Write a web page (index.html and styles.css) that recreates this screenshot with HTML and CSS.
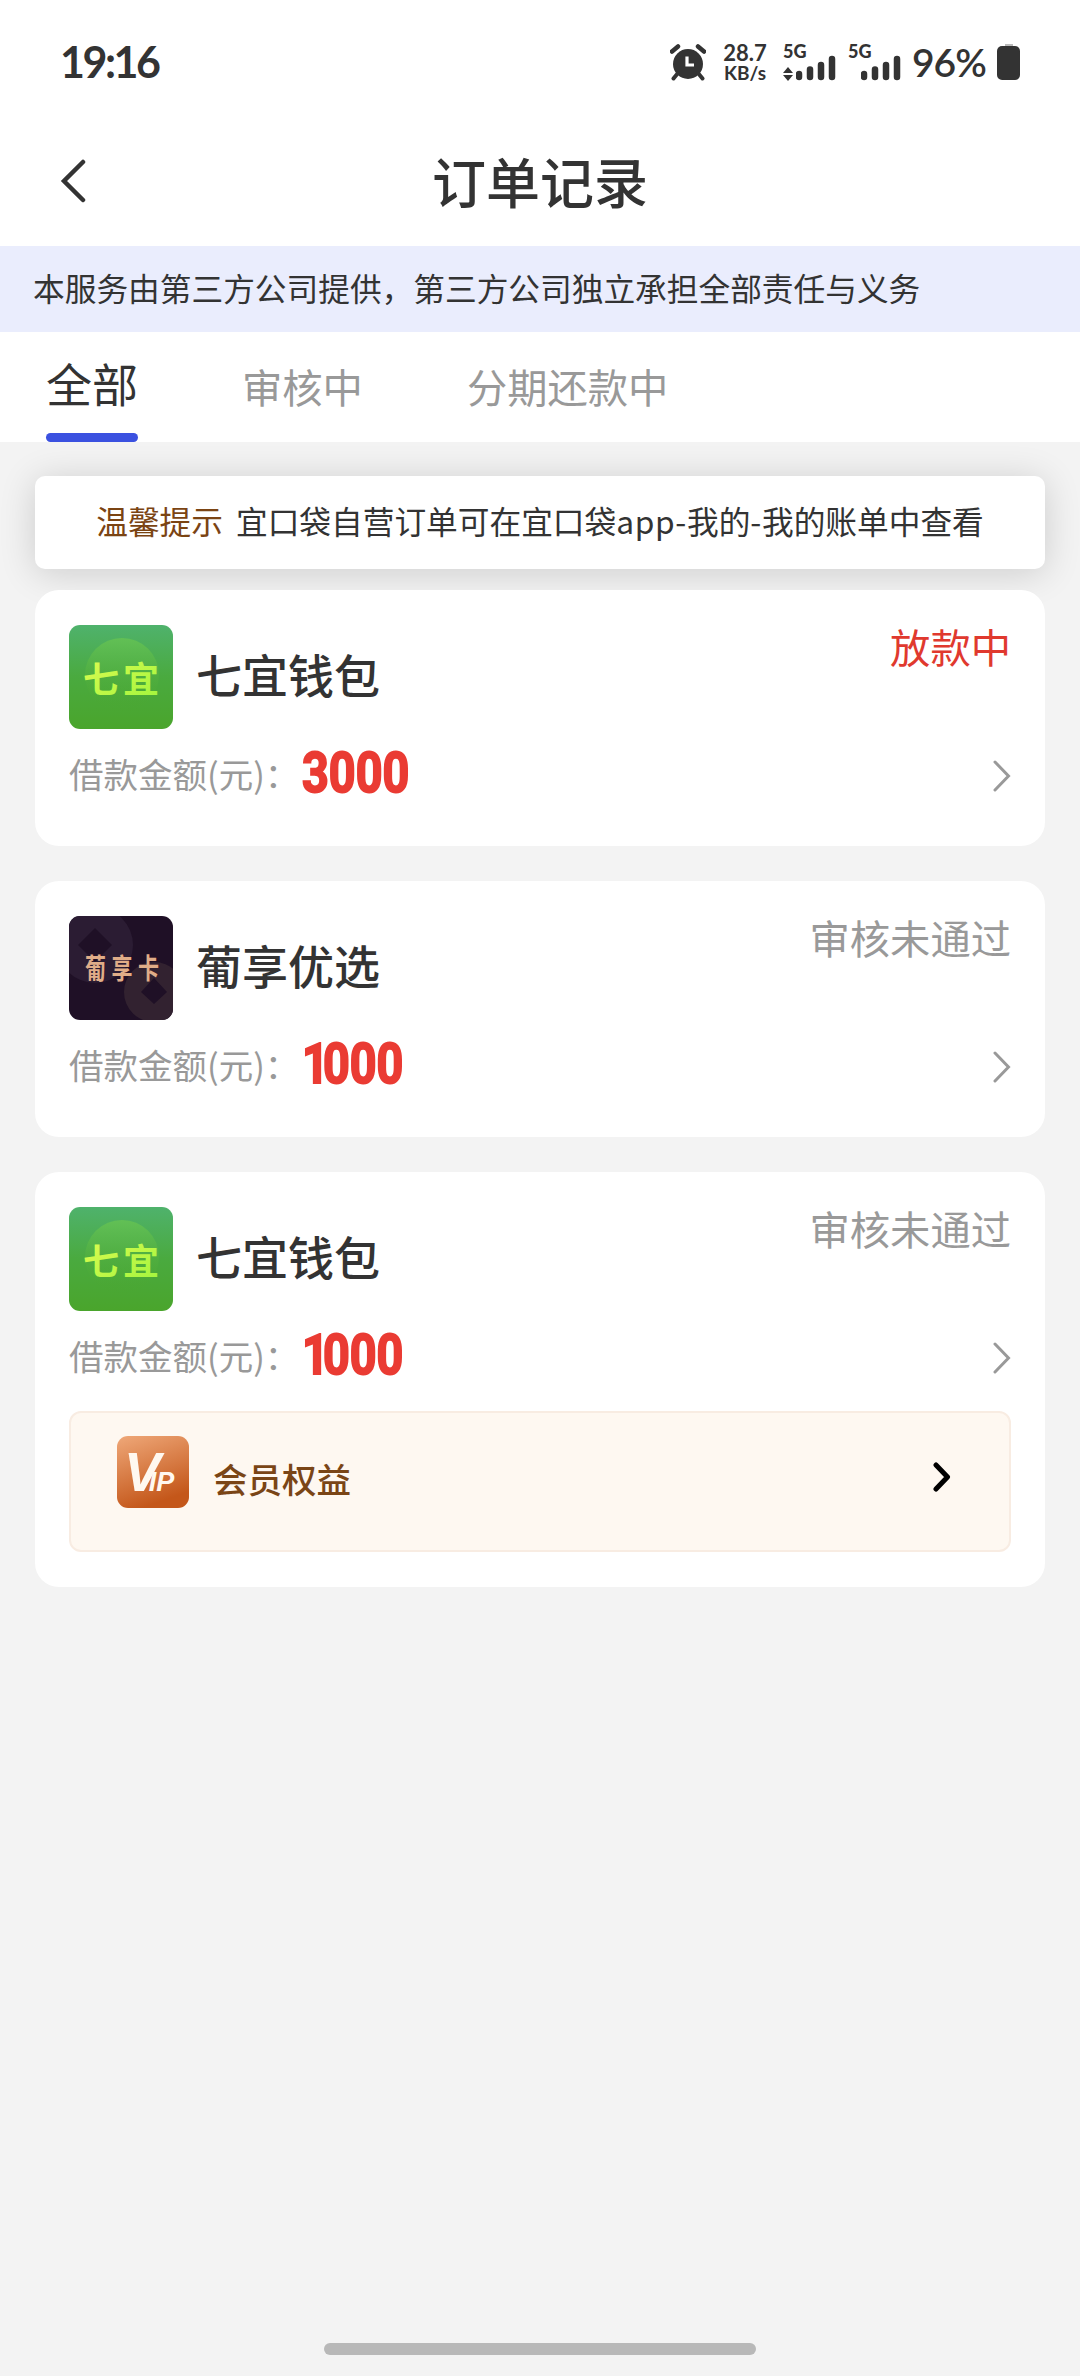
FILE: index.html
```html
<!DOCTYPE html>
<html lang="zh-CN">
<head>
<meta charset="utf-8">
<title>订单记录</title>
<link rel="stylesheet" href="styles.css">
</head>
<body>
<svg width="0" height="0" class="defs" aria-hidden="true">
  <defs>
    <linearGradient id="green" x1="0" y1="0" x2="0" y2="1"><stop offset="0" stop-color="#4fb26c"/><stop offset=".5" stop-color="#4aaa3f"/><stop offset="1" stop-color="#4aa52c"/></linearGradient>
    <linearGradient id="disc" x1="0" y1="0" x2="0" y2="1"><stop offset="0" stop-color="#62c055"/><stop offset="1" stop-color="#4aa52c" stop-opacity="0"/></linearGradient>
    <linearGradient id="lime" x1="0" y1="0" x2="1" y2="1"><stop offset="0" stop-color="#e2fb52"/><stop offset="1" stop-color="#9df53c"/></linearGradient>
    <linearGradient id="copper" x1="0" y1="0" x2=".35" y2="1"><stop offset="0" stop-color="#efa879"/><stop offset="1" stop-color="#c4571a"/></linearGradient>
    <symbol id="logo-qiyi" viewBox="0 0 104 104">
      <rect width="104" height="104" fill="url(#green)"/>
      <circle cx="53" cy="50" r="37" fill="url(#disc)"/>
      <text x="14" y="68" class="logo-text logo-text-green">七宜</text>
    </symbol>
    <symbol id="logo-pu" viewBox="0 0 104 104">
      <rect width="104" height="104" fill="#1f1026"/>
      <circle cx="26" cy="29" r="38" fill="#2b1c33"/>
      <path d="M26 12L43 29L26 46L9 29Z" fill="#1f1026"/>
      <circle cx="85" cy="76" r="30" fill="#322230"/>
      <path d="M85 62L98 76L85 88L72 76Z" fill="#1f1026"/>
      <text x="16" y="47" transform="scale(1 1.350)" class="logo-text logo-text-gold">葡享卡</text>
    </symbol>
    <symbol id="chevron" viewBox="0 0 18 32"><path d="M2 2L15.5 16L2 30" fill="none" stroke="#999" stroke-width="3" stroke-linecap="round"/></symbol>
    <symbol id="signal" viewBox="0 0 40 26"><path d="M3 19V22M14 14.500V22M25 10V22M36 4V22" stroke="#333" stroke-width="6.500" stroke-linecap="round"/></symbol>
  </defs>
</svg>

<header class="top">
  <div class="status-bar">
    <span class="clock">19:16</span>
    <div class="indicators">
      <svg class="alarm" viewBox="0 0 36 37"><circle cx="18" cy="20" r="15" fill="#333"/><path d="M2 7.500L8 2.500M34 7.500L28 2.500" stroke="#333" stroke-width="4.500" stroke-linecap="round"/><path d="M8 29L3.500 34.500M28 29L32.500 34.500" stroke="#333" stroke-width="4" stroke-linecap="round"/><path d="M17 12.500V21H24" fill="none" stroke="#fff" stroke-width="3.200"/></svg>
      <div class="speed"><span class="rate">28.7</span><span class="unit">KB/s</span></div>
      <div class="cell"><span class="net">5G</span><svg class="updown" viewBox="0 0 10 14"><path d="M5 0L10 6H0ZM5 14L0 8H10Z" fill="#333"/></svg><svg class="signal"><use href="#signal"/></svg></div>
      <div class="cell cell-b"><span class="net">5G</span><svg class="signal"><use href="#signal"/></svg></div>
      <span class="percent">96%</span>
      <svg class="battery" viewBox="0 0 23 36"><rect x="8" y="0" width="8" height="4" fill="#bbb"/><rect y="2" width="23" height="34" rx="5" fill="#333"/></svg>
    </div>
  </div>
  <div class="nav">
    <svg class="back" viewBox="0 0 26 44"><path d="M23 3L4 22L23 41" fill="none" stroke="#333" stroke-width="4.500" stroke-linecap="round"/></svg>
    <h1 class="title">订单记录</h1>
  </div>
</header>
<p class="banner">本服务由第三方公司提供，第三方公司独立承担全部责任与义务</p>
<nav class="tabs">
  <a class="tab tab-active">全部</a>
  <a class="tab">审核中</a>
  <a class="tab">分期还款中</a>
</nav>
<main class="content">
  <p class="tip"><span class="tip-label">温馨提示</span><span>宜口袋自营订单可在宜口袋<span class="latin">app-</span>我的<span class="latin">-</span>我的账单中查看</span></p>
  <section class="orders">
    <article class="card">
      <div class="head"><svg class="logo"><use href="#logo-qiyi"/></svg><h2 class="name">七宜钱包</h2><span class="state state-red">放款中</span></div>
      <div class="row"><span class="label">借款金额(元)：</span><span class="amount">3000</span><svg class="chevron"><use href="#chevron"/></svg></div>
    </article>
    <article class="card">
      <div class="head"><svg class="logo"><use href="#logo-pu"/></svg><h2 class="name">葡享优选</h2><span class="state">审核未通过</span></div>
      <div class="row"><span class="label">借款金额(元)：</span><span class="amount"><span class="one">1</span>000</span><svg class="chevron"><use href="#chevron"/></svg></div>
    </article>
    <article class="card card-vip">
      <div class="head"><svg class="logo"><use href="#logo-qiyi"/></svg><h2 class="name">七宜钱包</h2><span class="state">审核未通过</span></div>
      <div class="row"><span class="label">借款金额(元)：</span><span class="amount"><span class="one">1</span>000</span><svg class="chevron"><use href="#chevron"/></svg></div>
      <div class="vip">
        <svg class="vip-icon" viewBox="0 0 72 72"><rect width="72" height="72" rx="11" fill="url(#copper)"/><text x="7" y="55" class="vip-mark">V<tspan dx="-12" class="vip-ip">IP</tspan></text></svg>
        <span class="vip-text">会员权益</span>
        <svg class="vip-arrow" viewBox="0 0 18 30"><path d="M3 3L14.500 15L3 27" fill="none" stroke="#000" stroke-width="5" stroke-linecap="round" stroke-linejoin="round"/></svg>
      </div>
    </article>
  </section>
</main>
<footer class="home"><div class="home-bar"></div></footer>
</body>
</html>
```
FILE: styles.css
```css
* { box-sizing: border-box; }
body {
  margin: 0;
  min-height: 2376px;
  display: flex;
  flex-direction: column;
  background: #f3f3f3;
  color: #333;
  font-family: "Noto Sans CJK SC", sans-serif;
}
h1, h2, p { margin: 0; font-weight: 500; }
svg { display: block; flex: none; }
.defs { position: absolute; }
.top { height: 246px; background: #fff; }
.status-bar {
  height: 124px;
  padding: 0 60px;
  display: flex;
  align-items: center;
  justify-content: space-between;
}
.clock {
  font: 700 43px/50px Lato, sans-serif;
  letter-spacing: -2.5px;
}
.indicators { display: flex; align-items: center; font-family: Lato, sans-serif; }
.alarm { width: 36px; height: 37px; }
.speed {
  width: 46px;
  margin-left: 16px;
  display: flex;
  flex-direction: column;
  align-items: center;
  font-weight: 700;
  white-space: nowrap;
}
.rate { font-size: 22px; line-height: 21px; }
.unit { font-size: 19px; line-height: 19px; }
.cell {
  width: 55px;
  height: 37px;
  margin-left: 15px;
  display: grid;
  grid-template-columns: 13px 40px;
  grid-template-rows: 11px 26px;
}
.net { grid-column: 1 / 3; font-weight: 900; font-size: 18px; line-height: 15px; }
.updown { grid-column: 1; width: 10px; height: 14px; align-self: end; }
.signal { grid-column: 2; width: 40px; height: 26px; }
.cell-b { margin-left: 10px; }
.percent { width: 76px; margin-left: 9px; font-size: 39px; font-weight: 600; line-height: 40px; letter-spacing: -1px; white-space: nowrap; }
.battery { width: 23px; height: 36px; margin-left: 9px; }
.nav {
  height: 113px;
  padding: 0 60px;
  display: grid;
  grid-template-columns: 26px 1fr 26px;
  align-items: center;
}
.back { width: 26px; height: 44px; }
.title { text-align: center; font-size: 54px; line-height: 70px; }
.banner {
  height: 86px;
  padding-left: 33px;
  background: #eaedfd;
  font-size: 31.7px;
  font-weight: 400;
  line-height: 83px;
}
.tabs { height: 110px; padding-left: 46px; display: flex; gap: 104px; background: #fff; }
.tab { font-size: 40.3px; line-height: 107px; color: #999; }
.tab-active {
  display: flex;
  flex-direction: column;
  font-size: 46px;
  line-height: 101px;
  color: #333;
}
.tab-active::after { content: ""; height: 9px; border-radius: 4.5px; background: #3b51e0; }
.content { flex: 1; padding: 34px 35px 0; }
.tip {
  height: 93px;
  display: flex;
  justify-content: center;
  gap: 13px;
  border-radius: 10px;
  background: #fff;
  box-shadow: 0 4px 36px rgba(0, 0, 0, .16);
  font-size: 31.7px;
  font-weight: 400;
  line-height: 88px;
}
.tip-label { color: #7b4413; }
.latin { letter-spacing: .6px; }
.orders { position: relative; margin-top: 21px; display: flex; flex-direction: column; gap: 35px; }
.card { height: 256px; padding: 35px 34px; border-radius: 24px; background: #fff; }
.card-vip { height: 415px; }
.head { height: 104px; display: flex; align-items: center; }
.logo { width: 104px; height: 104px; border-radius: 11px; }
.logo-text { font-family: "Noto Sans CJK SC", sans-serif; font-weight: 700; }
.logo-text-green { font-size: 36px; letter-spacing: 4px; fill: url(#lime); }
.logo-text-gold { font-size: 21px; letter-spacing: 5.5px; fill: #e0ad88; }
.name { margin: -8px 0 0 23px; font-size: 46px; line-height: 60px; }
.state { margin-left: auto; align-self: flex-start; margin-top: -6px; font-size: 40.3px; line-height: 54px; color: #999; }
.state-red { color: #e0392e; }
.row { height: 93px; display: flex; align-items: center; }
.label { margin-top: -5px; font-size: 34.5px; line-height: 50px; color: #999; }
.amount {
  margin: -5px 0 0 3px;
  font: 700 55px/60px Roboto, sans-serif;
  color: #ea3b33;
  -webkit-text-stroke: 2px #ea3b33;
  transform: scaleX(.85);
  transform-origin: left;
}
.one { letter-spacing: -7px; }
.chevron { width: 18px; height: 32px; margin-left: auto; }
.vip {
  height: 141px;
  margin-top: 7px;
  padding: 0 58px 0 46px;
  display: flex;
  align-items: flex-start;
  border: 2px solid #f8ece2;
  border-radius: 12px;
  background: #fef8f1;
}
.vip-icon { width: 72px; height: 72px; margin-top: 23px; }
.vip-mark { font: italic 700 55px "Liberation Sans", sans-serif; fill: #fff8f0; }
.vip-ip { font-size: 27px; }
.vip-text { margin: 40px 0 0 24px; font-size: 34.5px; font-weight: 500; line-height: 50px; color: #7a4516; }
.vip-arrow { width: 18px; height: 30px; margin: 49px 0 0 auto; }
.home { height: 33px; display: flex; justify-content: center; }
.home-bar { width: 432px; height: 12px; border-radius: 6px; background: #b8b8b8; }
```
